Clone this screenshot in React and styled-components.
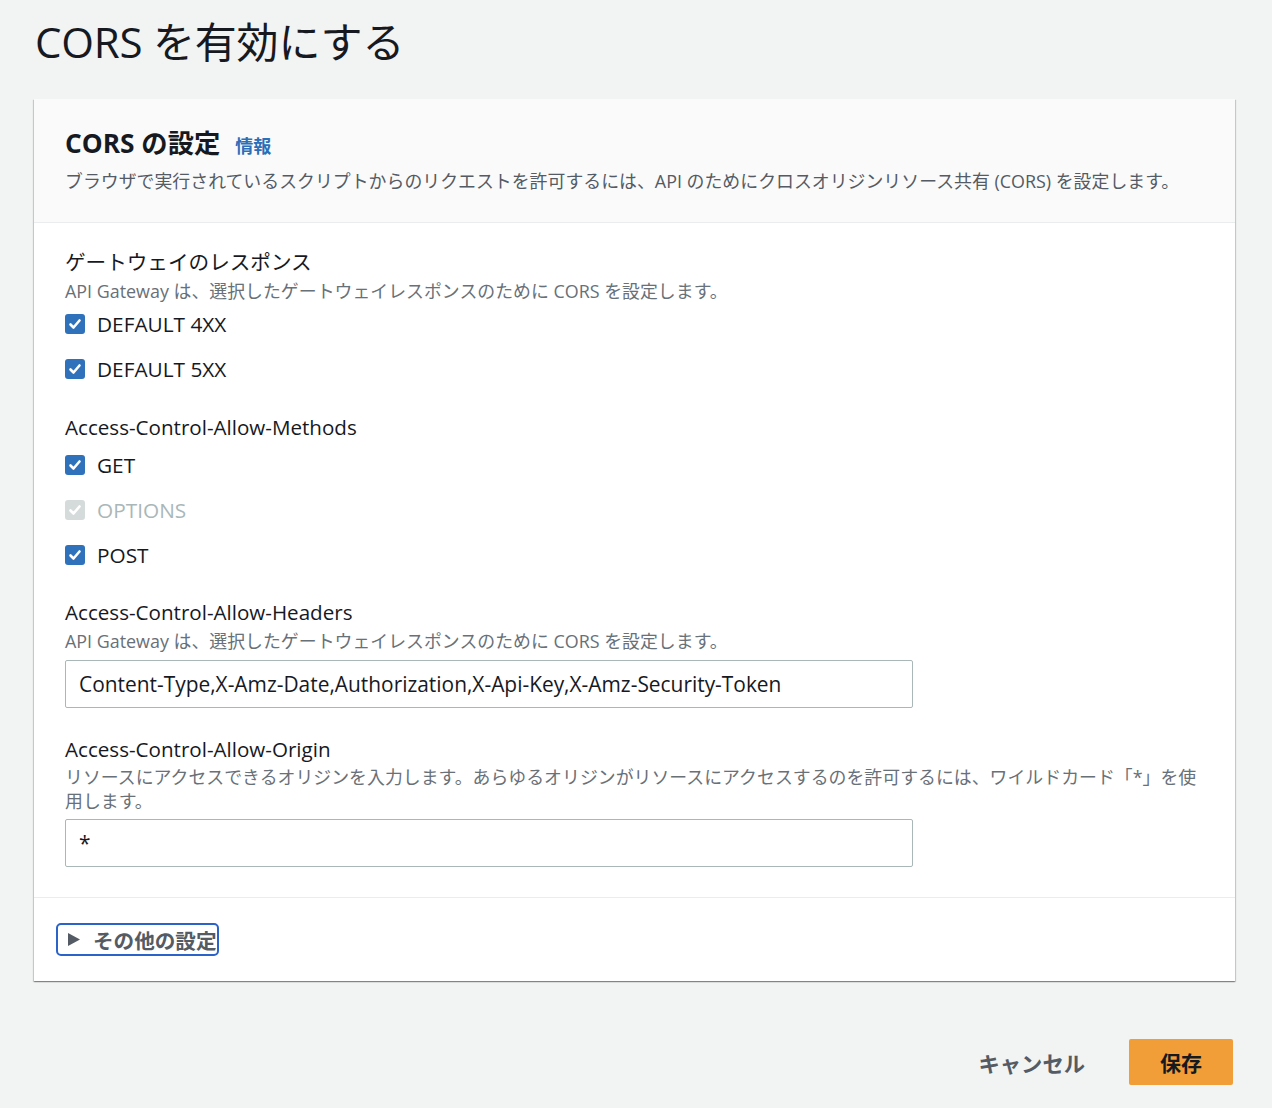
import styled, { createGlobalStyle } from "styled-components";

const FONT = `"Open Sans", "Noto Sans CJK JP", sans-serif`;

const GlobalStyle = createGlobalStyle`
  html, body {
    margin: 0;
    padding: 0;
    background: #f2f3f3;
    font-family: ${FONT};
    color: #16191f;
  }
`;

const Page = styled.div`
  width: 1201px;
  padding: 0 37px 0 34px;
  min-height: 1108px;
`;

const PageTitle = styled.h1`
  margin: 0;
  padding: 17px 0 0 1px;
  height: 99px;
  box-sizing: border-box;
  font-size: 42px;
  line-height: 50px;
  font-weight: 400;
  letter-spacing: -0.2px;
`;

const Card = styled.section`
  background: #fff;
  box-shadow: 0 1px 1px 0 rgba(0, 28, 36, 0.3), 1px 1px 1px 0 rgba(0, 28, 36, 0.15),
    -1px 1px 1px 0 rgba(0, 28, 36, 0.15);
`;

const CardHeader = styled.header`
  background: #fafafa;
  border-bottom: 1px solid #eaeded;
  padding: 28px 31px 30px;
`;

const CardTitle = styled.h2`
  margin: 0;
  display: flex;
  align-items: baseline;
  gap: 15px;
  font-size: 26.3px;
  line-height: 32px;
  font-weight: 700;
`;

const InfoLink = styled.a`
  font-size: 18px;
  font-weight: 700;
  color: #2b6fb8;
  text-decoration: none;
`;

const HeaderDesc = styled.p`
  margin: 8px 0 0;
  font-size: 17.9px;
  line-height: 22px;
  color: #545b64;
`;

const CardBody = styled.div`
  padding: 25px 31px 30px;
  border-bottom: 1px solid #eaeded;
  display: flex;
  flex-direction: column;
`;

const Field = styled.div`
  display: flex;
  flex-direction: column;
  margin-top: ${(p) => p.$top || 0}px;
`;

const Label = styled.div`
  font-size: 20.6px;
  line-height: 28px;
`;

const Desc = styled.div`
  margin-top: ${(p) => p.$top ?? 4}px;
  font-size: 17.9px;
  line-height: ${(p) => p.$lh || 22}px;
  color: #687078;
`;

const Options = styled.div`
  display: flex;
  flex-direction: column;
  gap: 17px;
  margin-top: ${(p) => p.$top}px;
`;

const CheckRow = styled.label`
  display: flex;
  align-items: center;
  gap: 12px;
  height: 28px;
  font-size: 20.8px;
  color: ${(p) => (p.$disabled ? "#aab7b8" : "#16191f")};
`;

const Box = styled.span`
  width: 20px;
  height: 20px;
  border-radius: 3px;
  background: ${(p) => (p.$disabled ? "#d5dbdb" : "#2f71ba")};
  display: flex;
  align-items: center;
  justify-content: center;
`;

const Input = styled.input`
  margin-top: ${(p) => p.$top}px;
  width: 848px;
  height: 48px;
  box-sizing: border-box;
  border: 1px solid #aab7b8;
  border-radius: 2px;
  padding: 0 13px;
  font-family: ${FONT};
  font-size: 20.9px;
  color: #16191f;
  background: #fff;
  outline: none;
`;

const CardFooter = styled.div`
  padding: 25px 22px 25px;
`;

const Expander = styled.button`
  display: inline-flex;
  align-items: center;
  gap: 12px;
  height: 33px;
  box-sizing: border-box;
  padding: 0 0 0 9px;
  border: 2px solid #2b63c9;
  border-radius: 5px;
  background: none;
  font-family: ${FONT};
  font-size: 20.6px;
  font-weight: 700;
  color: #545b64;
`;

const Actions = styled.div`
  display: flex;
  justify-content: flex-end;
  align-items: center;
  padding: 58px 2px 0 0;
`;

const TextButton = styled.button`
  background: none;
  border: none;
  padding: 0 22px;
  height: 46px;
  font-family: ${FONT};
  font-size: 21.3px;
  font-weight: 700;
  color: #545b64;
  margin-right: 22px;
`;

const PrimaryButton = styled.button`
  background: #f19e38;
  border: none;
  border-radius: 2px;
  width: 104px;
  height: 46px;
  font-family: ${FONT};
  font-size: 21px;
  font-weight: 700;
  color: #16191f;
`;

const Check = () => (
  <svg width="14" height="14" viewBox="0 0 14 14">
    <polyline points="2.5,7.5 5.5,10.5 11.5,3.5" fill="none" stroke="#fff" strokeWidth="2.6" strokeLinecap="round" strokeLinejoin="round" />
  </svg>
);

const Checkbox = ({ label, disabled }) => (
  <CheckRow $disabled={disabled}>
    <Box $disabled={disabled}>
      <Check />
    </Box>
    {label}
  </CheckRow>
);

const Caret = () => (
  <svg width="14" height="15" viewBox="0 0 14 15">
    <polygon points="1,1 13,7.5 1,14" fill="#545b64" />
  </svg>
);

export default function App() {
  return (
    <>
      <GlobalStyle />
      <Page>
        <PageTitle>CORS を有効にする</PageTitle>
        <Card>
          <CardHeader>
            <CardTitle>
              CORS の設定<InfoLink href="#">情報</InfoLink>
            </CardTitle>
            <HeaderDesc>
              ブラウザで実行されているスクリプトからのリクエストを許可するには、API のためにクロスオリジンリソース共有 (CORS) を設定します。
            </HeaderDesc>
          </CardHeader>
          <CardBody>
            <Field>
              <Label>ゲートウェイのレスポンス</Label>
              <Desc>API Gateway は、選択したゲートウェイレスポンスのために CORS を設定します。</Desc>
              <Options $top={8}>
                <Checkbox label="DEFAULT 4XX" />
                <Checkbox label="DEFAULT 5XX" />
              </Options>
            </Field>
            <Field $top={30}>
              <Label>Access-Control-Allow-Methods</Label>
              <Options $top={10}>
                <Checkbox label="GET" />
                <Checkbox label="OPTIONS" disabled />
                <Checkbox label="POST" />
              </Options>
            </Field>
            <Field $top={29}>
              <Label>Access-Control-Allow-Headers</Label>
              <Desc>API Gateway は、選択したゲートウェイレスポンスのために CORS を設定します。</Desc>
              <Input
                $top={8}
                readOnly
                value="Content-Type,X-Amz-Date,Authorization,X-Api-Key,X-Amz-Security-Token"
              />
            </Field>
            <Field $top={27}>
              <Label>Access-Control-Allow-Origin</Label>
              <Desc $top={2} $lh={24}>
                リソースにアクセスできるオリジンを入力します。あらゆるオリジンがリソースにアクセスするのを許可するには、ワイルドカード「*」を使用します。
              </Desc>
              <Input $top={6} readOnly value="*" />
            </Field>
          </CardBody>
          <CardFooter>
            <Expander>
              <Caret />
              その他の設定
            </Expander>
          </CardFooter>
        </Card>
        <Actions>
          <TextButton>キャンセル</TextButton>
          <PrimaryButton>保存</PrimaryButton>
        </Actions>
      </Page>
    </>
  );
}
